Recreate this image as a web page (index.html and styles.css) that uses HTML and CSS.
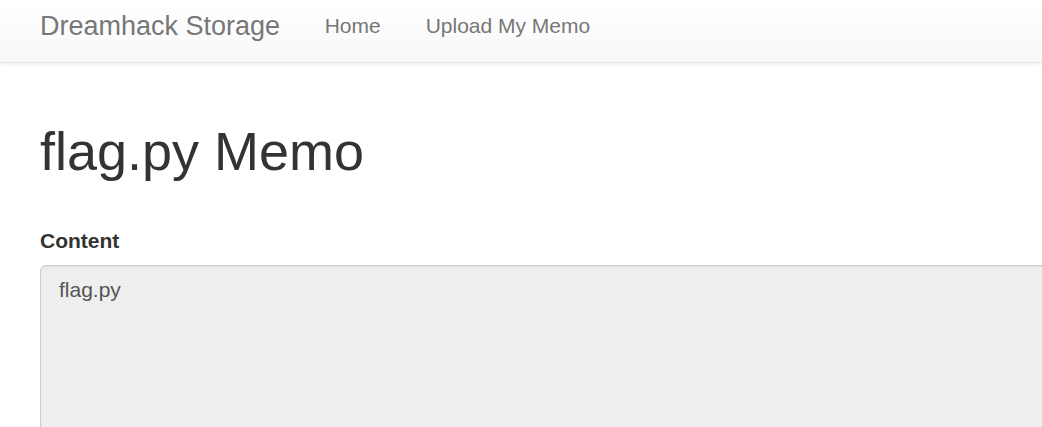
FILE: index.html
```html
<!DOCTYPE html>
<html lang="en">
<head>
<meta charset="utf-8">
<title>flag.py Memo</title>
<link rel="stylesheet" href="styles.css">
</head>
<body>
<nav class="navbar">
  <a class="brand" href="#">Dreamhack Storage</a>
  <ul class="nav">
    <li><a href="#">Home</a></li>
    <li><a href="#">Upload My Memo</a></li>
  </ul>
</nav>
<main class="container">
  <h1 class="title">flag.py Memo</h1>
  <div class="form-group">
    <label class="label" for="content">Content</label>
    <textarea id="content" class="memo" readonly>flag.py</textarea>
  </div>
</main>
</body>
</html>
```
FILE: styles.css
```css
* { box-sizing: border-box; }
html, body {
  margin: 0;
  padding: 0;
  height: 100%;
  overflow: hidden;
  background: #fff;
}
body {
  display: flex;
  flex-direction: column;
  font-family: "Liberation Sans", Arial, sans-serif;
  font-size: 21px;
  line-height: 30px;
  color: #333;
}
.navbar {
  display: flex;
  flex: none;
  align-items: flex-start;
  height: 63px;
  padding-left: 40px;
  background: linear-gradient(to bottom, #ffffff 0, #f8f8f8 100%);
  border-bottom: 1px solid #e7e7e7;
  box-shadow: inset 0 1px 0 rgba(255,255,255,.15), 0 1px 5px rgba(0,0,0,.075);
  position: relative;
  z-index: 1;
}
.brand {
  font-size: 27px;
  line-height: 30px;
  padding: 11px 22px 0 0;
  color: #777;
  text-decoration: none;
}
.nav {
  display: flex;
  list-style: none;
  margin: 0;
  padding: 0;
}
.nav a {
  display: block;
  padding: 11px 22.5px 0;
  color: #777;
  text-decoration: none;
}
.container {
  flex: 1;
  min-height: 0;
  overflow: hidden;
  padding-left: 40px;
}
.title {
  margin: 59px 0 45px;
  font-size: 54px;
  line-height: 59px;
  font-weight: 500;
  color: #333;
}
.form-group {
  margin-right: -20px;
}
.label {
  display: inline-block;
  margin-bottom: 9px;
  font-weight: bold;
}
.memo {
  display: block;
  width: 100%;
  height: 300px;
  padding: 9px 18px;
  font-family: inherit;
  font-size: 21px;
  line-height: 30px;
  color: #555;
  background: #eee;
  border: 1px solid #ccc;
  border-radius: 6px;
  box-shadow: inset 0 1px 1px rgba(0,0,0,.075);
  resize: none;
  outline: none;
}
```
